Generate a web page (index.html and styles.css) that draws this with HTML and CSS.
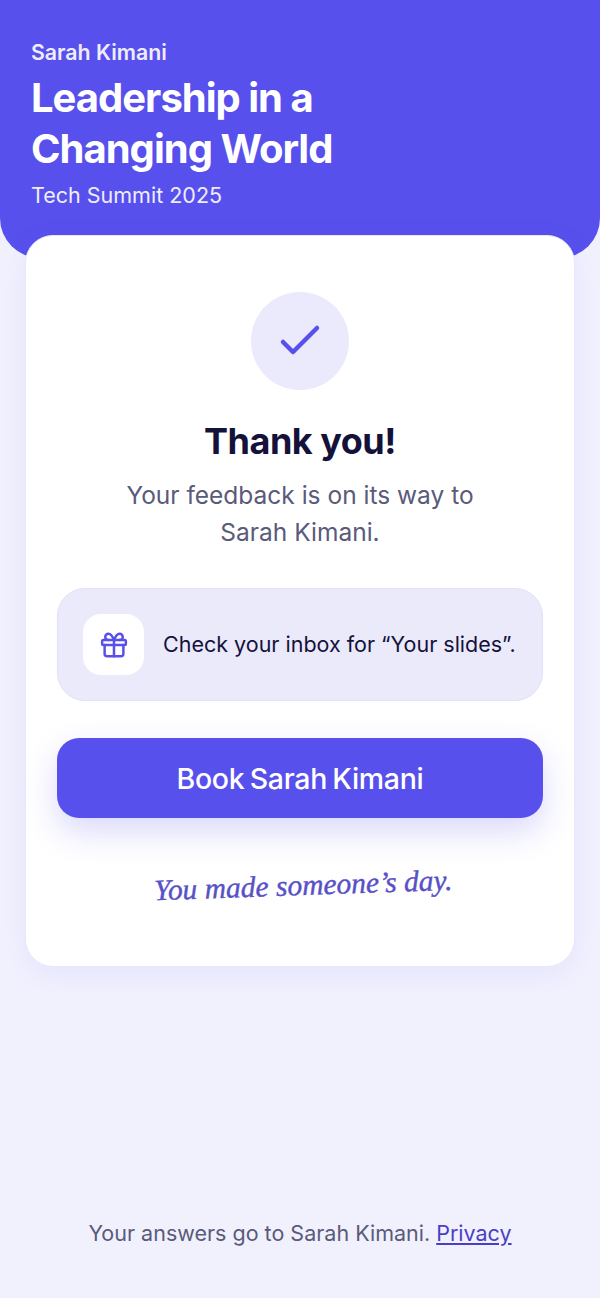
FILE: index.html
```html
<!DOCTYPE html>
<html lang="en">
<head>
    <meta charset="UTF-8">
    <meta name="viewport" content="width=device-width, initial-scale=1.0">
    <title>Thank you</title>
    <link rel="stylesheet" href="styles.css">
</head>
<body>
    <header class="hero">
        <p class="speaker">Sarah Kimani</p>
        <h1>Leadership in a<br>Changing World</h1>
        <p class="event">Tech Summit 2025</p>
    </header>

    <main class="card">
        <div class="check-circle">
            <svg width="48" height="48" viewBox="0 0 48 48" fill="none" stroke="currentColor" stroke-width="4.500" stroke-linecap="round" stroke-linejoin="round">
                <path d="M7 25l10 10 24-24"/>
            </svg>
        </div>
        <h2>Thank you!</h2>
        <p class="sent">Your feedback is on its way to<br>Sarah Kimani.</p>

        <div class="notice">
            <div class="notice-icon">
                <svg width="30" height="30" viewBox="0 0 24 24" fill="none" stroke="currentColor" stroke-width="2" stroke-linecap="round" stroke-linejoin="round">
                    <rect x="2.500" y="8" width="19" height="4" rx="1"/>
                    <path d="M12 8v13"/>
                    <path d="M19.500 12v7a2 2 0 0 1-2 2h-11a2 2 0 0 1-2-2v-7"/>
                    <path d="M7.500 8a2.500 2.500 0 0 1 0-5C10 3 12 8 12 8s2-5 4.500-5a2.500 2.500 0 0 1 0 5"/>
                </svg>
            </div>
            <p>Check your inbox for “Your slides”.</p>
        </div>

        <a class="book-btn" href="#">Book Sarah Kimani</a>

        <p class="note">You made someone’s day.</p>
    </main>

    <footer class="foot">
        Your answers go to Sarah Kimani. <a href="#">Privacy</a>
    </footer>
</body>
</html>
```

FILE: styles.css
```css
* {
    box-sizing: border-box;
}

body {
    font-family: Inter, "Liberation Sans", sans-serif;
    background-color: #f1f1fe;
    margin: 0;
    height: 1298px;
    display: flex;
    flex-direction: column;
    overflow: hidden;
}

.hero {
    background-color: #5850ec;
    color: #fff;
    height: 258px;
    padding: 38px 31px 0;
    border-radius: 0 0 40px 40px;
}

.speaker {
    margin: 0;
    font-size: 21.300px;
    line-height: 28px;
    font-weight: 600;
    color: #eeedfd;
}

.hero h1 {
    margin: 6px 0 0;
    font-size: 40px;
    line-height: 51px;
    font-weight: 700;
    letter-spacing: -1px;
}

.event {
    margin: 6px 0 0;
    font-size: 21.500px;
    line-height: 30px;
    color: #eeedfd;
}

.card {
    position: relative;
    margin: -23px 25px 0;
    height: 732px;
    padding: 56px 31px 0;
    background-color: #fff;
    border: 1px solid #e9e8fb;
    border-radius: 28px;
    box-shadow: 0 8px 30px rgba(88, 80, 236, 0.08);
    display: flex;
    flex-direction: column;
    align-items: center;
}

.check-circle {
    width: 98px;
    height: 98px;
    border-radius: 50%;
    background-color: #eaeafc;
    color: #5850ec;
    display: flex;
    align-items: center;
    justify-content: center;
}

.card h2 {
    margin: 28px 0 0;
    font-size: 36px;
    line-height: 46px;
    font-weight: 700;
    letter-spacing: -0.5px;
    color: #14123a;
}

.sent {
    margin: 13px 0 0;
    font-size: 24.500px;
    line-height: 37px;
    text-align: center;
    color: #5a5a7a;
}

.notice {
    margin-top: 37px;
    width: 100%;
    height: 113px;
    padding: 0 25px;
    background-color: #eaeafb;
    border: 1px solid #e2e1f7;
    border-radius: 28px;
    display: flex;
    align-items: center;
    gap: 19px;
}

.notice-icon {
    flex: none;
    width: 61px;
    height: 61px;
    background-color: #fff;
    border-radius: 18px;
    color: #5850ec;
    display: flex;
    align-items: center;
    justify-content: center;
}

.notice p {
    margin: 0 0 2px;
    font-size: 21.500px;
    white-space: nowrap;
    color: #14123a;
}

.book-btn {
    margin-top: 37px;
    width: 100%;
    height: 80px;
    background-color: #5850ec;
    color: #fff;
    border-radius: 22px;
    font-size: 28.500px;
    font-weight: 500;
    letter-spacing: -0.3px;
    word-spacing: -2px;
    text-decoration: none;
    display: flex;
    align-items: center;
    justify-content: center;
    box-shadow: 0 14px 32px rgba(88, 80, 236, 0.22);
}

.note {
    margin: 47px 0 0 6px;
    font-family: "Liberation Serif", serif;
    font-style: italic;
    font-size: 29.500px;
    line-height: 40px;
    color: #5850c8;
    -webkit-text-stroke: 0.4px #5850c8;
    transform: rotate(-2deg);
}

.foot {
    margin-top: auto;
    padding-bottom: 49px;
    text-align: center;
    font-size: 21.500px;
    line-height: 32px;
    color: #5a5a7a;
}

.foot a {
    color: #4a3fc4;
}
```
